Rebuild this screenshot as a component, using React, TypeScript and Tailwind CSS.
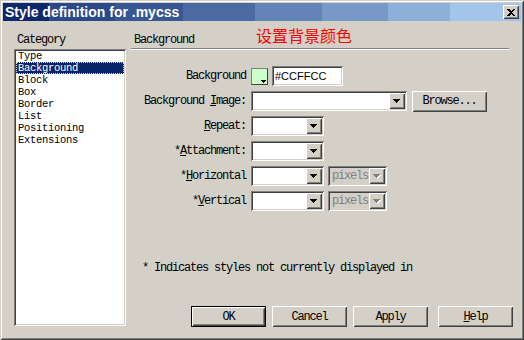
import React from 'react';

const mono = "font-['Liberation_Mono','Courier_New',monospace] text-[12px] tracking-[-1.2px] leading-[12px]";
const listMono = "font-['Liberation_Mono','Courier_New',monospace] text-[10.5px] tracking-[-0.3px] leading-[12px]";
const sunken = 'shadow-[inset_1px_1px_#808080,inset_-1px_-1px_#ffffff,inset_2px_2px_#404040,inset_-2px_-2px_#d4d0c8]';
const raised = 'shadow-[inset_1px_1px_#ffffff,inset_-1px_-1px_#404040,inset_2px_2px_#d4d0c8,inset_-2px_-2px_#808080]';

const categories = ['Type', 'Background', 'Block', 'Box', 'Border', 'List', 'Positioning', 'Extensions'];

function Arrow({ disabled }: { disabled?: boolean }) {
  return (
    <div className={`w-[16px] h-full bg-[#d4d0c8] flex items-center justify-center ${raised}`}>
      <svg width="8" height="5" viewBox="0 0 8 5" shapeRendering="crispEdges">
        {disabled && <path d="M1 1H8V2H7V3H6V4H5V5H4V4H3V3H2V2H1Z" fill="#ffffff" />}
        <path d="M0 0H7V1H6V2H5V3H4V4H3V3H2V2H1V1H0Z" fill={disabled ? '#808080' : '#000000'} />
      </svg>
    </div>
  );
}

function Select({ className, disabled, value }: { className: string; disabled?: boolean; value?: string }) {
  return (
    <div className={`h-[20px] p-[2px] flex ${sunken} ${disabled ? 'bg-[#d4d0c8]' : 'bg-white'} ${className}`}>
      <div className={`flex-1 flex items-center pl-[2px] ${mono} text-[#808080]`}>{value}</div>
      <Arrow disabled={disabled} />
    </div>
  );
}

function Button({ label, def, className }: { label: React.ReactNode; def?: boolean; className?: string }) {
  return (
    <div className={`w-[75px] h-[21px] ${def ? 'border border-black' : ''} ${className ?? ''}`}>
      <div className={`w-full h-full bg-[#d4d0c8] flex items-center justify-center text-black ${mono} ${raised}`}>
        {label}
      </div>
    </div>
  );
}

function Label({ children }: { children: React.ReactNode }) {
  return <div className={`flex items-center justify-end h-[20px] pr-[1px] text-black ${mono}`}>{children}</div>;
}

export default function App() {
  return (
    <div className="w-[524px] h-[340px] bg-[#d4d0c8] p-[3px] flex flex-col shadow-[inset_1px_1px_#d4d0c8,inset_-1px_-1px_#404040,inset_2px_2px_#ffffff,inset_-2px_-2px_#808080]">
      {/* title bar */}
      <div className="h-[18px] flex items-center justify-between pl-[2px] pr-[2px] bg-[linear-gradient(to_right,#0e286c_0_46px,#2b4888_46px_112px,#385694_112px_180px,#4b69a3_180px_252px,#6383b9_252px_319px,#7898c8_319px_385px,#8db0da_385px_447px,#a3c5ec_447px)]">
        <span className="font-['Liberation_Sans',Arial,sans-serif] font-bold text-[14px] text-white leading-[16px]">
          Style definition for .mycss
        </span>
        <div className={`w-[16px] h-[14px] bg-[#d4d0c8] flex items-center justify-center ${raised}`}>
          <svg width="8" height="7" viewBox="0 0 8 7" shapeRendering="crispEdges">
            <path d="M0 0H2L4 2L6 0H8V1L5 3.5L8 6V7H6L4 5L2 7H0V6L3 3.5L0 1Z" fill="#000" />
          </svg>
        </div>
      </div>

      <div className="flex flex-1">
        {/* category column */}
        <div className="w-[123px] pl-[11px] flex flex-col">
          <div className={`mt-[13px] pl-[3px] h-[12px] text-black ${mono}`}>Category</div>
          <div className={`mt-[3px] w-[112px] h-[277px] bg-white px-[2px] pt-[1px] ${sunken}`}>
            {categories.map((c) => (
              <div
                key={c}
                className={`h-[12px] pl-[2px] ${listMono} ${
                  c === 'Background'
                    ? 'bg-[#0a246a] text-white outline outline-dotted outline-[#e8e0a0] -outline-offset-1'
                    : 'text-black'
                }`}
              >
                {c}
              </div>
            ))}
          </div>
        </div>

        {/* panel */}
        <div className="flex-1 pl-[5px] flex flex-col">
          <div className="mt-[6px] h-[19px] flex items-start">
            <span className={`mt-[7px] pl-[3px] text-black ${mono}`}>Background</span>
            <span className="ml-[62px] font-['Noto_Sans_CJK_SC',sans-serif] text-[16px] leading-[17px] text-[#ff0000]">
              设置背景颜色
            </span>
          </div>
          <div className="mt-[2px] w-[378px] border-t border-t-[#808080] border-b border-b-white" />

          <div className="mt-[16px] grid grid-cols-[116px_auto] gap-x-[4px] gap-y-[5px]">
            <Label>Background</Label>
            <div className="flex items-center h-[20px] gap-[4px]">
              <div className="w-[17px] h-[17px] border border-[#808080] border-r-[#404040] border-b-[#404040] bg-[#ccffcc] flex items-end justify-end p-[1px]">
                <svg width="5" height="3" viewBox="0 0 5 3" shapeRendering="crispEdges">
                  <path d="M0 0H5V1H4V2H3V3H2V2H1V1H0Z" fill="#000" />
                </svg>
              </div>
              <div className={`w-[71px] h-[20px] bg-white p-[2px] flex items-center ${sunken}`}>
                <span className="pl-[1px] font-['Liberation_Sans',Arial,sans-serif] text-[11px] text-black">#CCFFCC</span>
              </div>
            </div>

            <Label>
              Background&nbsp;<span className="underline underline-offset-1">I</span>mage:
            </Label>
            <div className="flex items-center h-[20px]">
              <Select className="w-[156px]" />
              <Button label="Browse..." className="ml-[5px]" />
            </div>

            <Label>
              <span className="underline underline-offset-1">R</span>epeat:
            </Label>
            <div className="flex">
              <Select className="w-[73px]" />
            </div>

            <Label>
              *<span className="underline underline-offset-1">A</span>ttachment:
            </Label>
            <div className="flex">
              <Select className="w-[73px]" />
            </div>

            <Label>
              *<span className="underline underline-offset-1">H</span>orizontal
            </Label>
            <div className="flex gap-[4px]">
              <Select className="w-[73px]" />
              <Select className="w-[59px]" disabled value="pixels" />
            </div>

            <Label>
              *<span className="underline underline-offset-1">V</span>ertical
            </Label>
            <div className="flex gap-[4px]">
              <Select className="w-[73px]" />
              <Select className="w-[59px]" disabled value="pixels" />
            </div>
          </div>

          <div className={`mt-[51px] pl-[11px] text-black ${mono}`}>* Indicates styles not currently displayed in</div>

          <div className="mt-[32px] pl-[60px] flex">
            <Button label="OK" def />
            <Button label="Cancel" className="ml-[6px]" />
            <Button label="Apply" className="ml-[6px]" />
            <Button
              label={
                <span>
                  <span className="underline underline-offset-1">H</span>elp
                </span>
              }
              className="ml-[10px]"
            />
          </div>
        </div>
      </div>
    </div>
  );
}
